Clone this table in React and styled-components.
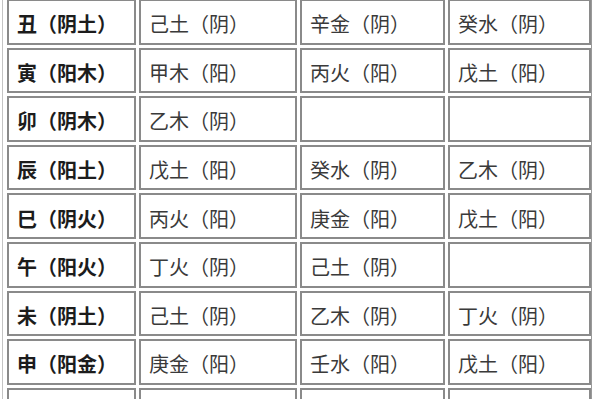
import React from 'react'
import styled, { createGlobalStyle } from 'styled-components'

const GlobalStyle = createGlobalStyle`
  html, body {
    margin: 0;
    padding: 0;
    background: #fff;
    overflow: hidden;
  }
  body {
    font-family: "Noto Sans CJK SC", "Noto Sans", sans-serif;
  }
`

const Frame = styled.div`
  width: 590px;
  height: 400px;
  margin-left: 2px;
  margin-top: -1px;
  padding: 0 1px 0 4px;
  box-sizing: border-box;
  border-left: 1px solid #c4c4c4;
  border-right: 1px solid #9a9a9a;
  overflow: hidden;
`

const Grid = styled.div`
  display: grid;
  grid-template-columns: 129px 158px 145px 143px;
  grid-auto-rows: 45.6px;
  gap: 3px;
`

const Cell = styled.div`
  display: flex;
  align-items: center;
  box-sizing: border-box;
  border: 2px solid #8a8a8a;
  padding: 4px 0 0 8px;
  font-size: 20px;
  white-space: nowrap;
  font-weight: ${p => (p.$head ? 700 : 400)};
  color: ${p => (p.$head ? '#1c1c1c' : '#3a3a3a')};
`

const rows = [
  ['丑（阴土）', '己土（阴）', '辛金（阴）', '癸水（阴）'],
  ['寅（阳木）', '甲木（阳）', '丙火（阳）', '戊土（阳）'],
  ['卯（阴木）', '乙木（阴）', '', ''],
  ['辰（阳土）', '戊土（阳）', '癸水（阴）', '乙木（阴）'],
  ['巳（阴火）', '丙火（阳）', '庚金（阳）', '戊土（阳）'],
  ['午（阳火）', '丁火（阴）', '己土（阴）', ''],
  ['未（阴土）', '己土（阴）', '乙木（阴）', '丁火（阴）'],
  ['申（阳金）', '庚金（阳）', '壬水（阳）', '戊土（阳）'],
  ['酉（阴金）', '辛金（阴）', '', ''],
]

export default function App() {
  return (
    <>
      <GlobalStyle />
      <Frame>
        <Grid>
          {rows.map((row, i) =>
            row.map((text, j) => (
              <Cell key={i + '-' + j} $head={j === 0}>
                {text}
              </Cell>
            ))
          )}
        </Grid>
      </Frame>
    </>
  )
}
